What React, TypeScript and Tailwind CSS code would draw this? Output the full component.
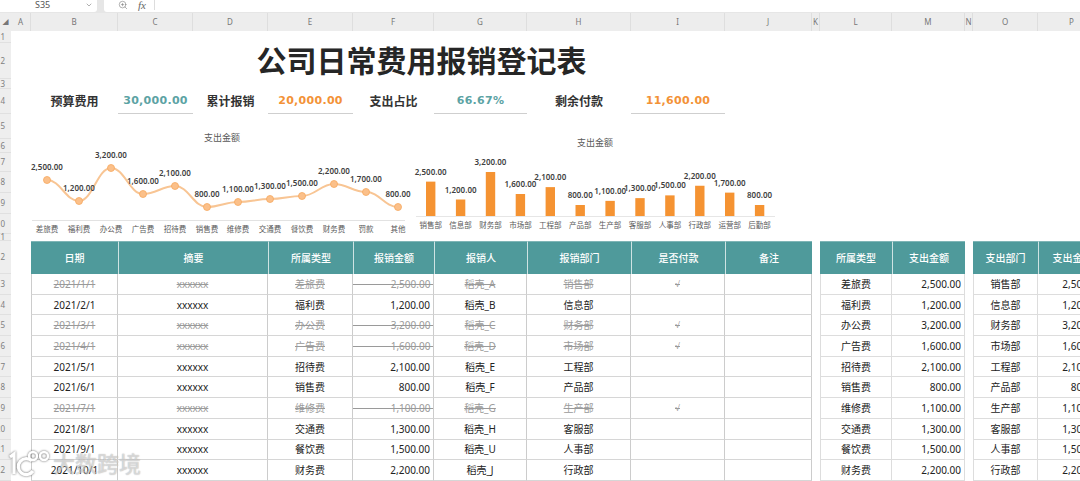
import React from 'react';
import { ChevronDown, ZoomIn } from 'lucide-react';

const cols = ['A', 'B', 'C', 'D', 'E', 'F', 'G', 'H', 'I', 'J', 'K', 'L', 'M', 'N', 'O', 'P'];

const topRows = [
  { n: 1, h: 'h-[12px]' },
  { n: 2, h: 'h-[36px]' },
  { n: 3, h: 'h-[10px]' },
  { n: 4, h: 'h-[25px]' },
  { n: 5, h: 'h-[25px]' },
  { n: 6, h: 'h-[14px]' },
  { n: 7, h: 'h-[19px]' },
  { n: 8, h: 'h-[21px]' },
  { n: 9, h: 'h-[21px]' },
  { n: 10, h: 'h-[20px]' },
  { n: 11, h: 'h-[7px]' },
  { n: 12, h: 'h-[33px]' },
];

const records = [
  { date: '2021/1/1', type: '差旅费', amount: '2,500.00', who: '稻壳_A', dept: '销售部', paid: true },
  { date: '2021/2/1', type: '福利费', amount: '1,200.00', who: '稻壳_B', dept: '信息部', paid: false },
  { date: '2021/3/1', type: '办公费', amount: '3,200.00', who: '稻壳_C', dept: '财务部', paid: true },
  { date: '2021/4/1', type: '广告费', amount: '1,600.00', who: '稻壳_D', dept: '市场部', paid: true },
  { date: '2021/5/1', type: '招待费', amount: '2,100.00', who: '稻壳_E', dept: '工程部', paid: false },
  { date: '2021/6/1', type: '销售费', amount: '800.00', who: '稻壳_F', dept: '产品部', paid: false },
  { date: '2021/7/1', type: '维修费', amount: '1,100.00', who: '稻壳_G', dept: '生产部', paid: true },
  { date: '2021/8/1', type: '交通费', amount: '1,300.00', who: '稻壳_H', dept: '客服部', paid: false },
  { date: '2021/9/1', type: '餐饮费', amount: '1,500.00', who: '稻壳_U', dept: '人事部', paid: false },
  { date: '2021/10/1', type: '财务费', amount: '2,200.00', who: '稻壳_J', dept: '行政部', paid: false },
];

const lineData = [
  { label: '差旅费', value: '2,500.00', x: 16, y: 66 },
  { label: '福利费', value: '1,200.00', x: 48, y: 87 },
  { label: '办公费', value: '3,200.00', x: 80, y: 54 },
  { label: '广告费', value: '1,600.00', x: 112, y: 80 },
  { label: '招待费', value: '2,100.00', x: 144, y: 72 },
  { label: '销售费', value: '800.00', x: 176, y: 93 },
  { label: '维修费', value: '1,100.00', x: 207, y: 88 },
  { label: '交通费', value: '1,300.00', x: 239, y: 85 },
  { label: '餐饮费', value: '1,500.00', x: 271, y: 82 },
  { label: '财务费', value: '2,200.00', x: 303, y: 70 },
  { label: '罚款', value: '1,700.00', x: 335, y: 78 },
  { label: '其他', value: '800.00', x: 367, y: 93 },
];

const barData = [
  { label: '销售部', value: '2,500.00', n: 2500 },
  { label: '信息部', value: '1,200.00', n: 1200 },
  { label: '财务部', value: '3,200.00', n: 3200 },
  { label: '市场部', value: '1,600.00', n: 1600 },
  { label: '工程部', value: '2,100.00', n: 2100 },
  { label: '产品部', value: '800.00', n: 800 },
  { label: '生产部', value: '1,100.00', n: 1100 },
  { label: '客服部', value: '1,300.00', n: 1300 },
  { label: '人事部', value: '1,500.00', n: 1500 },
  { label: '行政部', value: '2,200.00', n: 2200 },
  { label: '运营部', value: '1,700.00', n: 1700 },
  { label: '后勤部', value: '800.00', n: 800 },
];

// smooth curve through the points, same look as the spreadsheet's line chart
function smoothPath(pts: { x: number; y: number }[]) {
  let d = `M${pts[0].x} ${pts[0].y}`;
  for (let i = 0; i < pts.length - 1; i++) {
    const p = pts[i];
    const q = pts[i + 1];
    const mid = (q.x - p.x) * 0.42;
    d += ` C${p.x + mid} ${p.y} ${q.x - mid} ${q.y} ${q.x} ${q.y}`;
  }
  return d;
}

function LineChart() {
  return (
    <svg width="381" height="127" className="shrink-0">
      <text x="191" y="27" textAnchor="middle" fontSize="9" fill="#595959">支出金额</text>
      <path d={smoothPath(lineData)} fill="none" stroke="#F8C594" strokeWidth="2" />
      {lineData.map((d) => (
        <g key={d.label}>
          <circle cx={d.x} cy={d.y} r="3.5" fill="#FBC08A" stroke="#F6A860" strokeWidth="0.8" />
          <text x={d.x} y={d.y - 10} textAnchor="middle" fontSize="8" fontWeight="600" fill="#404040">{d.value}</text>
          <text x={d.x} y="118" textAnchor="middle" fontSize="7.5" fill="#595959">{d.label}</text>
        </g>
      ))}
      <line x1="1" x2="374" y1="106.5" y2="106.5" stroke="#E2E2E2" />
    </svg>
  );
}

function BarChart() {
  return (
    <svg width="400" height="127" className="shrink-0">
      <text x="183" y="32" textAnchor="middle" fontSize="9" fill="#595959">支出金额</text>
      {barData.map((d, i) => {
        const x = 18.7 + i * 29.9;
        const h = d.n * 0.01375;
        return (
          <g key={d.label}>
            <rect x={x - 4.7} y={102 - h} width="9.4" height={h} fill="#F59332" />
            <text x={x} y={102 - h - 7} textAnchor="middle" fontSize="8" fontWeight="600" fill="#404040">{d.value}</text>
            <text x={x} y="114" textAnchor="middle" fontSize="7.5" fill="#595959">{d.label}</text>
          </g>
        );
      })}
      <line x1="4" x2="363" y1="102.5" y2="102.5" stroke="#E6E6E6" />
    </svg>
  );
}

function Header({ children, first, wide }: { children: React.ReactNode; first?: boolean; wide?: boolean }) {
  return (
    <div className={`flex items-center justify-center border-t border-t-[#7fb5b6] bg-[#4F9A9B] text-[10px] font-medium text-white ${first ? '' : 'border-l border-l-[#cfe3e3]'} ${wide ? 'col-span-2' : ''}`}>
      {children}
    </div>
  );
}

function Cell({ children, done, first, right, wide }: { children?: React.ReactNode; done?: boolean; first?: boolean; right?: boolean; wide?: boolean }) {
  let align = 'justify-center';
  if (right) align = done ? 'justify-end' : 'justify-end pr-[3px]';
  return (
    <div
      className={`flex items-center overflow-hidden whitespace-pre border-b border-b-[#d6d6d6] border-r border-r-[#cccccc] pt-[1px] text-[10px] ${align} ${first ? 'border-l border-l-[#cccccc]' : ''} ${wide ? 'col-span-2' : ''} ${done ? 'text-[#9a9a9a] line-through' : 'text-[#222222]'}`}
    >
      {children}
    </div>
  );
}

function Kpi({ label, value, color }: { label: string; value: string; color: string }) {
  return (
    <>
      <div className="flex items-center justify-center text-[12px] font-bold text-[#333333]">{label}</div>
      <div className={`flex items-center justify-center border-b border-b-[#cfcfcf] font-['DejaVu_Sans','Noto_Sans',sans-serif] text-[11px] font-bold tracking-[0.3px] ${color}`}>
        {value}
      </div>
    </>
  );
}

function Watermark() {
  return (
    <div className="absolute left-[9px] top-[449px] flex items-center gap-[2px]">
      <svg width="42" height="28" viewBox="0 0 42 28" fill="none" stroke="#ffffff" strokeWidth="3.2" className="drop-shadow-[0_0_1px_rgba(0,0,0,0.6)]">
        <path d="M1 8 L5 5 V25" />
        <path d="M23 12 A8 8 0 1 0 24 22" />
        <circle cx="24" cy="7" r="4" strokeWidth="2.4" />
        <circle cx="35" cy="7" r="4" strokeWidth="2.4" />
      </svg>
      <span className="text-[22px] font-medium leading-none text-white/50 [text-shadow:0_0_1px_rgba(0,0,0,0.35)]">大数跨境</span>
    </div>
  );
}

export default function App() {
  return (
    <div className="relative h-[481px] w-[1080px] overflow-hidden bg-white font-['Noto_Sans','Noto_Sans_CJK_SC',sans-serif]">
      {/* formula bar */}
      <div className="flex h-[13px] gap-[7px] bg-[#e6e6e6]">
        <div className="flex h-[12px] w-[97px] items-start rounded-br-[3px] bg-white text-[9px] leading-[10px] text-[#555555]">
          <span className="ml-[35px] w-[50px]">S35</span>
          <ChevronDown size={8} className="mt-[1px] text-[#888888]" />
        </div>
        <div className="flex h-[12px] flex-1 items-start rounded-bl-[3px] bg-white text-[#666666]">
          <ZoomIn size={10} strokeWidth={1.2} className="ml-[14px]" />
          <span className="ml-[10px] font-['Liberation_Serif',serif] text-[11px] italic leading-[10px]">fx</span>
          <div className="ml-[8px] h-[10px] w-px bg-[#dddddd]" />
        </div>
      </div>

      {/* column letters */}
      <div className="grid h-[18px] grid-cols-[11px_20px_87px_75px_75px_85px_81px_93px_104px_94px_87px_8px_72px_73px_8px_65px_68px] bg-[#ededed] text-[8px] text-[#777777]">
        <div className="flex items-center justify-center text-[6px]">◢</div>
        {cols.map((c) => (
          <div key={c} className="flex items-center justify-center border-r border-r-[#dedede]">{c}</div>
        ))}
      </div>

      <div className="flex">
        {/* row numbers */}
        <div className="w-[11px] shrink-0 overflow-hidden bg-[#eeeeee] text-[8px] text-[#808080]">
          {topRows.map((r) => (
            <div key={r.n} className={`flex items-center justify-end border-b border-b-[#e0e0e0] pr-[6px] ${r.h}`}>{r.n}</div>
          ))}
          {records.map((_, i) => (
            <div key={i} className="flex h-[20.7px] items-center justify-end border-b border-b-[#e0e0e0] pr-[6px]">{i + 13}</div>
          ))}
        </div>

        <div className="w-[20px] shrink-0" />

        {/* sheet */}
        <div className="grid shrink-0 grid-cols-[87px_75px_75px_85px_81px_93px_104px_94px_87px_8px_72px_73px_8px_65px_68px] grid-rows-[12px_36px_10px_25px_127px_33px_repeat(10,20.7px)]">
          <div className="col-span-15" />
          <div className="col-span-9 flex items-center justify-center text-[30px] font-bold leading-none text-[#262626]">公司日常费用报销登记表</div>
          <div className="col-span-6" />
          <div className="col-span-15" />

          <Kpi label="预算费用" value="30,000.00" color="text-[#5CA3A4]" />
          <Kpi label="累计报销" value="20,000.00" color="text-[#F39237]" />
          <Kpi label="支出占比" value="66.67%" color="text-[#5CA3A4]" />
          <Kpi label="剩余付款" value="11,600.00" color="text-[#F39237]" />
          <div className="col-span-7" />

          <div className="col-span-9 flex">
            <LineChart />
            <BarChart />
          </div>
          <div className="col-span-6" />

          <Header first>日期</Header>
          <Header wide>摘要</Header>
          <Header>所属类型</Header>
          <Header>报销金额</Header>
          <Header>报销人</Header>
          <Header>报销部门</Header>
          <Header>是否付款</Header>
          <Header>备注</Header>
          <div className="col-start-11 flex items-center justify-center border-t border-t-[#7fb5b6] bg-[#4F9A9B] text-[10px] font-medium text-white">所属类型</div>
          <Header>支出金额</Header>
          <div className="col-start-14 flex items-center justify-center border-t border-t-[#7fb5b6] bg-[#4F9A9B] text-[10px] font-medium text-white">支出部门</div>
          <Header>支出金额</Header>

          {records.map((r, i) => (
            <React.Fragment key={r.date}>
              <Cell first done={r.paid}>{r.date}</Cell>
              <Cell wide done={r.paid}>xxxxxx</Cell>
              <Cell done={r.paid}>{r.type}</Cell>
              <Cell right done={r.paid}>{r.paid ? `                          ${r.amount} ` : r.amount}</Cell>
              <Cell done={r.paid}>{r.who}</Cell>
              <Cell done={r.paid}>{r.dept}</Cell>
              <Cell done={r.paid}>
                {r.paid ? <span className="font-['Liberation_Sans',sans-serif] text-[9px]">√</span> : ''}
              </Cell>
              <Cell />
              <div className="col-start-11 flex items-center justify-center border-x border-b border-[#dddddd] pt-[1px] text-[10px] text-[#222222]">{r.type}</div>
              <div className="flex items-center justify-end border-r border-b border-[#dddddd] pr-[3px] pt-[1px] text-[10px] text-[#222222]">{r.amount}</div>
              <div className="col-start-14 flex items-center justify-center border-x border-b border-[#dddddd] pt-[1px] text-[10px] text-[#222222]">{barData[i].label}</div>
              <div className="flex items-center justify-end border-r border-b border-[#dddddd] pr-[3px] pt-[1px] text-[10px] text-[#222222]">{barData[i].value}</div>
            </React.Fragment>
          ))}
        </div>
      </div>

      <Watermark />
    </div>
  );
}
